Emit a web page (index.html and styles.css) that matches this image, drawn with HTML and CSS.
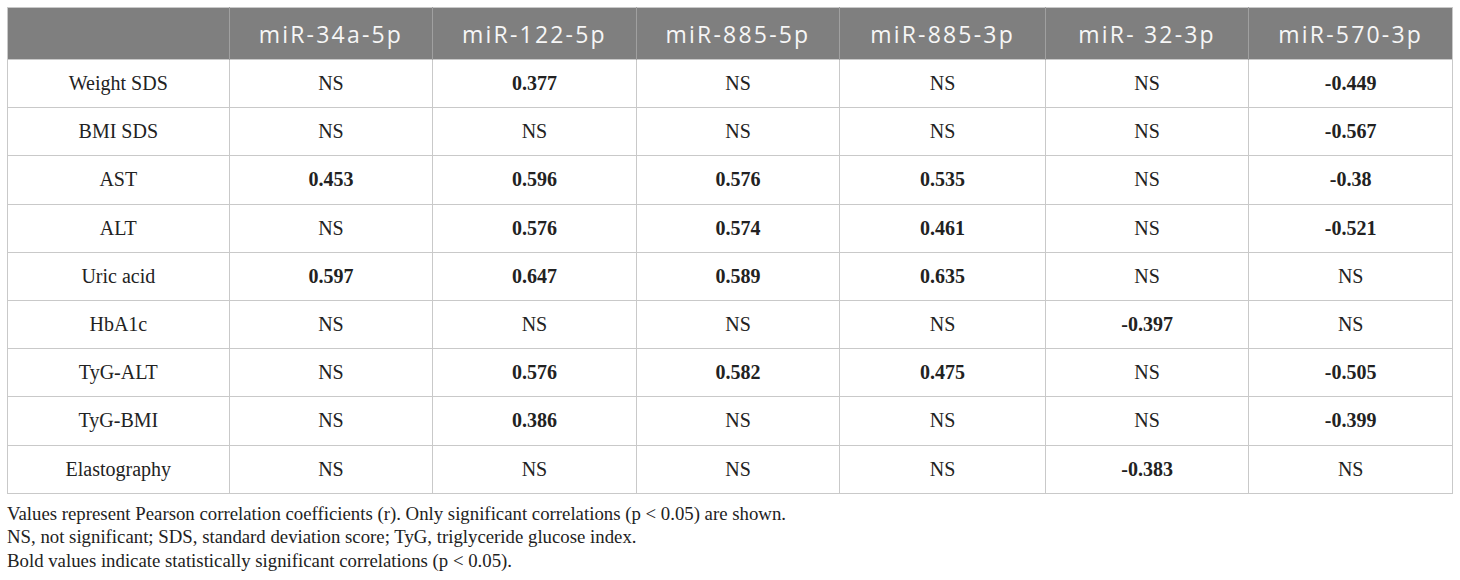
FILE: index.html
```html
<!DOCTYPE html>
<html lang="en">
<head>
    <meta charset="UTF-8">
    <title>miRNA correlations</title>
    <link rel="stylesheet" href="styles.css">
</head>
<body>
    <div class="tabla-wrap">
        <table class="tabla">
            <thead>
                <tr>
                    <th class="primera"></th>
                    <th>miR-34a-5p</th>
                    <th>miR-122-5p</th>
                    <th>miR-885-5p</th>
                    <th class="ancha">miR-885-3p</th>
                    <th>miR- 32-3p</th>
                    <th>miR-570-3p</th>
                </tr>
            </thead>
            <tbody>
                <tr><td>Weight SDS</td><td>NS</td><td class="sig">0.377</td><td>NS</td><td>NS</td><td>NS</td><td class="sig">-0.449</td></tr>
                <tr><td>BMI SDS</td><td>NS</td><td>NS</td><td>NS</td><td>NS</td><td>NS</td><td class="sig">-0.567</td></tr>
                <tr><td>AST</td><td class="sig">0.453</td><td class="sig">0.596</td><td class="sig">0.576</td><td class="sig">0.535</td><td>NS</td><td class="sig">-0.38</td></tr>
                <tr><td>ALT</td><td>NS</td><td class="sig">0.576</td><td class="sig">0.574</td><td class="sig">0.461</td><td>NS</td><td class="sig">-0.521</td></tr>
                <tr><td>Uric acid</td><td class="sig">0.597</td><td class="sig">0.647</td><td class="sig">0.589</td><td class="sig">0.635</td><td>NS</td><td>NS</td></tr>
                <tr><td>HbA1c</td><td>NS</td><td>NS</td><td>NS</td><td>NS</td><td class="sig">-0.397</td><td>NS</td></tr>
                <tr><td>TyG-ALT</td><td>NS</td><td class="sig">0.576</td><td class="sig">0.582</td><td class="sig">0.475</td><td>NS</td><td class="sig">-0.505</td></tr>
                <tr><td>TyG-BMI</td><td>NS</td><td class="sig">0.386</td><td>NS</td><td>NS</td><td>NS</td><td class="sig">-0.399</td></tr>
                <tr><td>Elastography</td><td>NS</td><td>NS</td><td>NS</td><td>NS</td><td class="sig">-0.383</td><td>NS</td></tr>
            </tbody>
        </table>
        <div class="notas">
            <p>Values represent Pearson correlation coefficients (r). Only significant correlations (p &lt; 0.05) are shown.</p>
            <p>NS, not significant; SDS, standard deviation score; TyG, triglyceride glucose index.</p>
            <p>Bold values indicate statistically significant correlations (p &lt; 0.05).</p>
        </div>
    </div>
</body>
</html>
```

FILE: styles.css
```css
body {
    margin: 0;
    padding: 7px 7px 0 7px;
    background: #fff;
    color: #222;
    font-family: 'Liberation Serif', serif;
}
.tabla {
    border-collapse: collapse;
    table-layout: fixed;
    border: 1px solid #c9c9c9;
}
.tabla th {
    background-color: #7f7f7f;
    color: #f6f6f6;
    font-family: 'Open Sans', sans-serif;
    font-weight: normal;
    font-size: 23px;
    letter-spacing: 2.2px;
    height: 51px;
    padding: 0;
    text-align: center;
    border-left: 1px solid #a0a0a0;
    width: 203px;
}
.tabla th.primera {
    width: 221px;
    border-left: none;
}
.tabla th.ancha {
    width: 205px;
}
.tabla td {
    height: 47.2px;
    padding: 0;
    text-align: center;
    font-size: 20px;
    border: 1px solid #c9c9c9;
}
.tabla td.sig {
    font-weight: bold;
}
.notas {
    margin-top: 8px;
    font-size: 18.8px;
    line-height: 23.5px;
}
.notas p {
    margin: 0;
}
```
